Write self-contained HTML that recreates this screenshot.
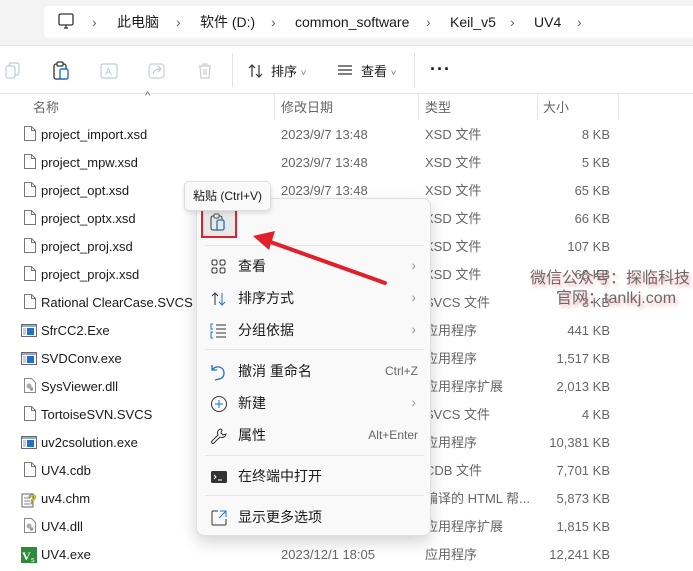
<!DOCTYPE html><html><head><meta charset="utf-8"><style>
*{margin:0;padding:0;box-sizing:border-box}
body{width:693px;height:571px;overflow:hidden;background:#fff;font-family:"Liberation Sans","Noto Sans CJK SC",sans-serif;font-size:13px;color:#1a1a1a;position:relative}
.a{position:absolute;white-space:nowrap;line-height:16px}
.top{position:absolute;left:0;top:0;width:693px;height:46px;background:#f3f3f3;border-bottom:1px solid #e3e3e3}
.addr{position:absolute;left:44px;top:6px;width:660px;height:32px;background:#fff;border-radius:5px}
.tb{position:absolute;left:0;top:47px;width:693px;height:47px;background:#fff;border-bottom:1px solid #e5e5e5}
.row{position:absolute;left:0;height:28px;width:620px}
.row span{position:absolute;top:6px;line-height:16px}
.g{color:#666}
.bc{font-size:14px;top:14px}
.cv{font-size:14px;top:14px;color:#666}
.menu{position:absolute;left:196px;top:198px;width:235px;height:338px;background:#f9f9f9;border:1px solid #e0e0e0;border-radius:8px;box-shadow:0 6px 16px rgba(0,0,0,.18)}
.mi{position:absolute;left:0;width:235px;height:30px;font-size:14px}
.mi .t{position:absolute;left:41px;top:7px;line-height:16px}
.mi .k{position:absolute;right:14px;top:8px;font-size:12px;color:#666;line-height:14px}
.mi .ch{position:absolute;right:16px;top:6px;color:#999;font-size:14px;line-height:16px}
.mi svg{position:absolute;left:13px;top:7px}
.sep{position:absolute;left:8px;width:219px;height:1px;background:#e4e4e4}
</style></head><body>
<div class="top"><div class="addr"></div>
<svg class="a" style="left:57px;top:12px" width="18" height="18" viewBox="0 0 18 18"><rect x="2" y="2" width="14" height="11" rx="1.5" fill="none" stroke="#333" stroke-width="1.3"/><path d="M7 16h4M9 13v3" stroke="#333" stroke-width="1.3"/></svg>
<div class="a cv" style="left:92px">›</div>
<div class="a bc" style="left:117px">此电脑</div>
<div class="a cv" style="left:176px">›</div>
<div class="a bc" style="left:200px">软件 (D:)</div>
<div class="a cv" style="left:271px">›</div>
<div class="a bc" style="left:295px">common_software</div>
<div class="a cv" style="left:426px">›</div>
<div class="a bc" style="left:450px">Keil_v5</div>
<div class="a cv" style="left:510px">›</div>
<div class="a bc" style="left:534px">UV4</div>
<div class="a cv" style="left:577px">›</div>
</div>
<div class="tb">
<svg class="a" style="left:5px;top:15px" width="16" height="18"><rect x="4" y="1" width="10" height="12" rx="2" fill="none" stroke="#bcd" stroke-width="1.2"/><rect x="1" y="4" width="9" height="12" rx="2" fill="#fff" stroke="#bcd" stroke-width="1.2"/></svg>
<svg class="a" style="left:52px;top:14px" width="18" height="20"><rect x="2" y="3" width="12" height="15" rx="2" fill="none" stroke="#333" stroke-width="1.3"/><rect x="5" y="1" width="6" height="4" rx="1" fill="#fff" stroke="#333" stroke-width="1.2"/><rect x="8" y="8" width="8" height="10" rx="1.5" fill="#fff" stroke="#1a73c8" stroke-width="1.4"/></svg>
<svg class="a" style="left:100px;top:15px" width="18" height="18"><rect x="1" y="2" width="16" height="14" rx="2" fill="none" stroke="#bcd" stroke-width="1.2"/><text x="5" y="13" font-size="10" fill="#bcd" font-family="Liberation Sans">A</text></svg>
<svg class="a" style="left:148px;top:15px" width="18" height="18"><rect x="1" y="2" width="15" height="14" rx="3" fill="none" stroke="#ccd" stroke-width="1.2"/><path d="M5 12c1-4 4-5 7-5M10 4l3 3-3 3" fill="none" stroke="#bcd" stroke-width="1.2"/></svg>
<svg class="a" style="left:197px;top:15px" width="16" height="18"><path d="M2 4h12M6 4V2h4v2M3 4l1 12h8l1-12M7 7v6M9 7v6" fill="none" stroke="#ccc" stroke-width="1.2"/></svg>
<div class="a" style="left:232px;top:6px;width:1px;height:34px;background:#e3e3e3"></div>
<svg class="a" style="left:247px;top:15px" width="18" height="18"><path d="M5 15V3M2 6l3-3 3 3M12 3v12M9 12l3 3 3-3" fill="none" stroke="#333" stroke-width="1.2"/></svg>
<div class="a" style="left:271px;top:17px">排序 <span style="color:#888;font-size:10px">˅</span></div>
<svg class="a" style="left:337px;top:17px" width="16" height="12"><path d="M1 2h14M1 6h14M1 10h14" stroke="#333" stroke-width="1.2"/></svg>
<div class="a" style="left:361px;top:17px">查看 <span style="color:#888;font-size:10px">˅</span></div>
<div class="a" style="left:414px;top:6px;width:1px;height:34px;background:#e3e3e3"></div>
<div class="a" style="left:430px;top:14px;font-size:18px;font-weight:bold;letter-spacing:1px">···</div>
</div>
<div class="a g" style="left:145px;top:88px;font-size:11px">^</div>
<div class="a g" style="left:33px;top:100px">名称</div>
<div class="a g" style="left:281px;top:100px">修改日期</div>
<div class="a g" style="left:425px;top:100px">类型</div>
<div class="a g" style="left:543px;top:100px">大小</div>
<div class="a" style="left:274px;top:94px;width:1px;height:26px;background:#e5e5e5"></div>
<div class="a" style="left:418px;top:94px;width:1px;height:26px;background:#e5e5e5"></div>
<div class="a" style="left:537px;top:94px;width:1px;height:26px;background:#e5e5e5"></div>
<div class="a" style="left:618px;top:94px;width:1px;height:26px;background:#e5e5e5"></div>
<div id="rows"></div>
<script>
const R=[["project_import.xsd","2023/9/7 13:48","XSD 文件","8 KB","f"],["project_mpw.xsd","2023/9/7 13:48","XSD 文件","5 KB","f"],["project_opt.xsd","2023/9/7 13:48","XSD 文件","65 KB","f"],["project_optx.xsd","2023/9/7 13:48","XSD 文件","66 KB","f"],["project_proj.xsd","2023/9/7 13:48","XSD 文件","107 KB","f"],["project_projx.xsd","2023/9/7 13:48","XSD 文件","68 KB","f"],["Rational ClearCase.SVCS","2023/9/7 13:48","SVCS 文件","3 KB","f"],["SfrCC2.Exe","2023/9/7 13:48","应用程序","441 KB","e"],["SVDConv.exe","2023/9/7 13:48","应用程序","1,517 KB","e"],["SysViewer.dll","2023/9/7 13:48","应用程序扩展","2,013 KB","d"],["TortoiseSVN.SVCS","2023/9/7 13:48","SVCS 文件","4 KB","f"],["uv2csolution.exe","2023/9/7 13:48","应用程序","10,381 KB","e"],["UV4.cdb","2023/9/7 13:48","CDB 文件","7,701 KB","f"],["uv4.chm","2023/9/7 13:48","编译的 HTML 帮...","5,873 KB","h"],["UV4.dll","2023/9/7 13:48","应用程序扩展","1,815 KB","d"],["UV4.exe","2023/12/1 18:05","应用程序","12,241 KB","u"]];
const ic={f:'<svg width="14" height="17"><path d="M1.5 1.5h7l4 4v10h-11z" fill="#fff" stroke="#777"/><path d="M8.5 1.5v4h4" fill="none" stroke="#777"/></svg>',
e:'<svg width="16" height="14"><rect x=".5" y="1.5" width="15" height="12" fill="#fff" stroke="#667"/><rect x="1" y="2" width="14" height="2" fill="#9ab"/><rect x="6" y="5" width="7" height="7" fill="#1d6fd0"/><rect x="2" y="5" width="3" height="7" fill="#ccd"/></svg>',
d:'<svg width="14" height="17"><path d="M1.5 1.5h7l4 4v10h-11z" fill="#fff" stroke="#888"/><circle cx="6" cy="9" r="2.5" fill="#aaa"/><circle cx="8.5" cy="12" r="1.8" fill="#999"/></svg>',
h:'<svg width="17" height="17"><rect x="1" y="3" width="11" height="13" fill="#fff" stroke="#666"/><path d="M3 7h6M3 10h6M3 13h6" stroke="#888"/><text x="7" y="13" font-size="14" font-weight="bold" fill="#e8d400" stroke="#665" stroke-width=".5" font-family="Liberation Sans">?</text></svg>',
u:'<svg width="16" height="16"><rect width="16" height="16" fill="#2e8b3a"/><text x="1" y="13" font-size="12" font-weight="bold" fill="#fff" font-family="Liberation Serif">V</text><text x="10" y="15" font-size="7" fill="#fff" font-family="Liberation Sans">s</text></svg>'};
let h='';R.forEach((r,i)=>{const y=120+i*28;h+=`<div class="row" style="top:${y}px"><span style="left:${r[4]=='e'||r[4]=='h'||r[4]=='u'?21:23}px;top:${r[4]=='f'||r[4]=='d'?5:7}px">${ic[r[4]]}</span><span style="left:41px;top:7px">${r[0]}</span><span class="g" style="left:281px;top:7px">${r[1]}</span><span class="g" style="left:425px;top:7px">${r[2]}</span><span class="g" style="right:10px;top:7px">${r[3]}</span></div>`});
document.getElementById('rows').innerHTML=h;
</script>
<div class="a" style="left:530px;top:270px;font-size:16px;line-height:18px;color:#6a6a6a;text-shadow:2px 3px 3px #f6b0b6">微信公众号：探临科技</div>
<div class="a" style="left:556px;top:290px;font-size:16px;line-height:18px;color:#6a6a6a;text-shadow:2px 3px 3px #f6b0b6">官网：tanlkj.com</div>
<div class="menu">
<div class="sep" style="top:46px"></div><div class="sep" style="top:150px"></div><div class="sep" style="top:256px"></div><div class="sep" style="top:296px"></div>
<div class="mi" style="top:52px"><svg width="18" height="18"><rect x="2" y="2" width="5" height="5" rx="1.5" fill="none" stroke="#333"/><rect x="10" y="2" width="5" height="5" rx="1.5" fill="none" stroke="#333"/><rect x="2" y="10" width="5" height="5" rx="1.5" fill="none" stroke="#333"/><rect x="10" y="10" width="5" height="5" rx="1.5" fill="none" stroke="#333"/></svg><span class="t">查看</span><span class="ch">›</span></div>
<div class="mi" style="top:84px"><svg width="18" height="18"><path d="M5 15V3M2 6l3-3 3 3" fill="none" stroke="#333"/><path d="M12 3v12M9 12l3 3 3-3" fill="none" stroke="#1a73c8"/></svg><span class="t">排序方式</span><span class="ch">›</span></div>
<div class="mi" style="top:116px"><svg width="18" height="18"><path d="M6 3h10M6 7h10M6 11h10M6 15h10" stroke="#333"/><path d="M3 2H1v5h2M3 10H1v6h2" fill="none" stroke="#1a73c8"/></svg><span class="t">分组依据</span><span class="ch">›</span></div>
<div class="mi" style="top:157px"><svg width="18" height="18"><path d="M2 2v5h5M2 7c3-5 12-4 12 3s-7 6-9 7" fill="none" stroke="#1a73c8" stroke-width="1.3"/></svg><span class="t">撤消 重命名</span><span class="k">Ctrl+Z</span></div>
<div class="mi" style="top:189px"><svg width="18" height="18"><circle cx="9" cy="9" r="7.5" fill="none" stroke="#333"/><path d="M9 5v8M5 9h8" stroke="#1a73c8"/></svg><span class="t">新建</span><span class="ch">›</span></div>
<div class="mi" style="top:221px"><svg width="18" height="18"><path d="M11 2a4 4 0 0 0-3 6L2 14a1.4 1.4 0 0 0 2 2l6-6a4 4 0 0 0 6-3l-3 1-2-2 1-3z" fill="none" stroke="#333"/></svg><span class="t">属性</span><span class="k">Alt+Enter</span></div>
<div class="mi" style="top:262px"><svg width="18" height="18"><rect x="1" y="3" width="16" height="12" rx="1.5" fill="#333"/><path d="M4 7l2 2-2 2M8 12h4" stroke="#fff" fill="none"/></svg><span class="t">在终端中打开</span></div>
<div class="mi" style="top:303px"><svg width="18" height="18"><path d="M8 2H3a1 1 0 0 0-1 1v12a1 1 0 0 0 1 1h12a1 1 0 0 0 1-1v-5" fill="none" stroke="#333"/><path d="M10 2h6v6M16 2l-7 7" fill="none" stroke="#1a73c8"/></svg><span class="t">显示更多选项</span></div>
</div>
<div class="a" style="left:201px;top:209px;width:36px;height:29px;background:#e8e8e8;border:2px solid #e0202a"></div>
<svg class="a" style="left:209px;top:213px" width="18" height="20"><rect x="2" y="3" width="11" height="14" rx="2" fill="none" stroke="#555" stroke-width="1.2"/><rect x="5" y="1" width="5" height="4" rx="1" fill="#e8e8e8" stroke="#555"/><rect x="8" y="7" width="7" height="10" rx="1.5" fill="#e8e8e8" stroke="#1a73c8" stroke-width="1.3"/></svg>
<div class="a" style="left:184px;top:181px;width:87px;height:30px;background:#f9f9f9;border:1px solid #ddd;border-radius:5px;box-shadow:0 2px 5px rgba(0,0,0,.12);font-size:12px;padding:7px 0 0 8px;line-height:14px">粘贴 (Ctrl+V)</div>
<svg class="a" style="left:245px;top:225px" width="150" height="65"><path d="M140 58L20 15" stroke="#e0202a" stroke-width="4" stroke-linecap="round"/><path d="M8 11L30 6L24 25z" fill="#e0202a"/></svg>
</body></html>
